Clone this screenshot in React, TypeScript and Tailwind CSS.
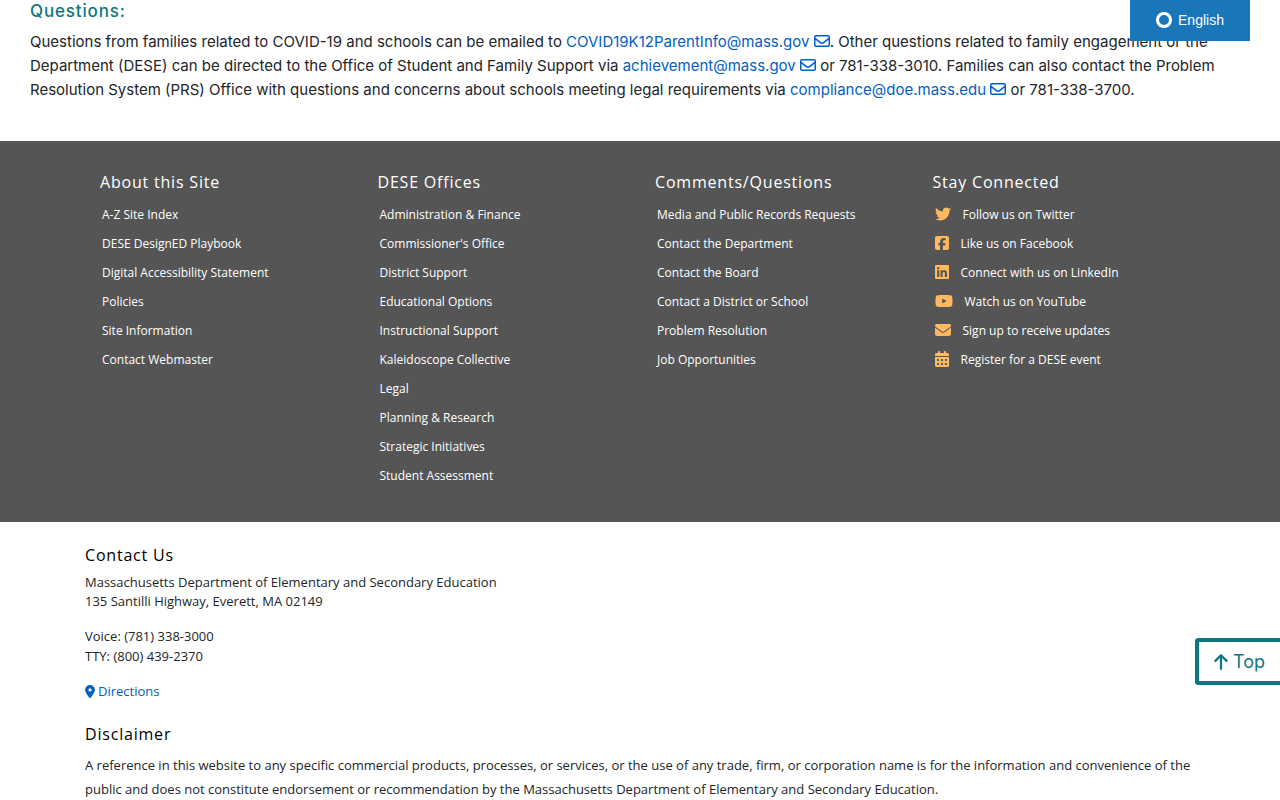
import type { ReactNode } from 'react';
import {
  FaArrowUp,
  FaCalendarDays,
  FaEnvelope,
  FaLinkedin,
  FaLocationDot,
  FaRegEnvelope,
  FaSquareFacebook,
  FaTwitter,
  FaYoutube,
} from 'react-icons/fa6';

const aboutLinks = [
  'A-Z Site Index',
  'DESE DesignED Playbook',
  'Digital Accessibility Statement',
  'Policies',
  'Site Information',
  'Contact Webmaster',
];

const officeLinks = [
  'Administration & Finance',
  "Commissioner's Office",
  'District Support',
  'Educational Options',
  'Instructional Support',
  'Kaleidoscope Collective',
  'Legal',
  'Planning & Research',
  'Strategic Initiatives',
  'Student Assessment',
];

const commentLinks = [
  'Media and Public Records Requests',
  'Contact the Department',
  'Contact the Board',
  'Contact a District or School',
  'Problem Resolution',
  'Job Opportunities',
];

const socialLinks = [
  { label: 'Follow us on Twitter', icon: <FaTwitter className="h-4 w-4" /> },
  { label: 'Like us on Facebook', icon: <FaSquareFacebook className="h-4 w-3.5" /> },
  { label: 'Connect with us on LinkedIn', icon: <FaLinkedin className="h-4 w-3.5" /> },
  { label: 'Watch us on YouTube', icon: <FaYoutube className="h-4 w-[18px]" /> },
  { label: 'Sign up to receive updates', icon: <FaEnvelope className="h-4 w-4" /> },
  { label: 'Register for a DESE event', icon: <FaCalendarDays className="h-4 w-3.5" /> },
];

function MailLink({ address }: { address: string }) {
  return (
    <a href={`mailto:${address}`} className="text-[#0060c7] hover:underline">
      {address} <FaRegEnvelope className="inline h-4 w-4 align-[-2px]" />
    </a>
  );
}

interface FooterColumnProps {
  title: string;
  children: ReactNode;
}

function FooterColumn({ title, children }: FooterColumnProps) {
  return (
    <div className="px-[15px]">
      <h2 className="text-base leading-6 font-medium tracking-wider">{title}</h2>
      <ul className="mt-1.5 px-0.5 text-xs font-medium">{children}</ul>
    </div>
  );
}

function FooterLink({ label, icon }: { label: string; icon?: ReactNode }) {
  return (
    <li className="h-[29px]">
      <a href="#" className="inline-flex h-[29px] items-center gap-3 hover:underline">
        {icon && <span className="pb-px text-[#ffb961]">{icon}</span>}
        {label}
      </a>
    </li>
  );
}

export default function App() {
  return (
    <div className="bg-white font-['Open_Sans','Noto_Sans',sans-serif] text-[#212529]">
      <button
        type="button"
        className="fixed top-0 right-[30px] z-10 flex h-[41px] w-[120px] items-center justify-center gap-1.5 bg-[#1976b9] pb-px font-['Liberation_Sans',Arial,sans-serif] text-sm text-white"
      >
        <span className="h-4 w-4 rounded-full border-3 border-white" />
        English
      </button>

      <main className="px-[30px] pb-[39px] font-['Inter',sans-serif]">
        <h2 className="text-[17px] leading-[22px] font-medium tracking-wider text-[#0e7680]">Questions:</h2>
        <p className="mt-2 text-[15px] leading-6">
          Questions from families related to COVID-19 and schools can be emailed to{' '}
          <MailLink address="COVID19K12ParentInfo@mass.gov" />. Other questions related to family engagement or the
          Department (DESE) can be directed to the Office of Student and Family Support via{' '}
          <MailLink address="achievement@mass.gov" /> or 781-338-3010. Families can also contact the Problem
          Resolution System (PRS) Office with questions and concerns about schools meeting legal requirements via{' '}
          <MailLink address="compliance@doe.mass.edu" /> or 781-338-3700.
        </p>
      </main>

      <footer>
        <div className="bg-[#555] pt-[29px] pb-8 text-white">
          <div className="mx-auto grid max-w-[1110px] grid-cols-4">
            <FooterColumn title="About this Site">
              {aboutLinks.map((label) => (
                <FooterLink key={label} label={label} />
              ))}
            </FooterColumn>
            <FooterColumn title="DESE Offices">
              {officeLinks.map((label) => (
                <FooterLink key={label} label={label} />
              ))}
            </FooterColumn>
            <FooterColumn title="Comments/Questions">
              {commentLinks.map((label) => (
                <FooterLink key={label} label={label} />
              ))}
            </FooterColumn>
            <FooterColumn title="Stay Connected">
              {socialLinks.map((link) => (
                <FooterLink key={link.label} label={link.label} icon={link.icon} />
              ))}
            </FooterColumn>
          </div>
        </div>

        <div className="mx-auto max-w-[1110px] pt-[21px] text-[13px] leading-[19px]">
          <h2 className="text-base leading-6 tracking-wider text-black">Contact Us</h2>
          <address className="mt-1.5 not-italic">
            Massachusetts Department of Elementary and Secondary Education
            <br />
            135 Santilli Highway, Everett, MA 02149
          </address>
          <p className="mt-[15px] leading-5">
            Voice: (781) 338-3000
            <br />
            TTY: (800) 439-2370
          </p>
          <p className="mt-4">
            <a href="#" className="flex w-fit items-center gap-[3px] text-[#0060c7] hover:underline">
              <FaLocationDot className="h-[13px] w-2.5" />
              Directions
            </a>
          </p>
          <h2 className="mt-[21px] text-base leading-6 tracking-wider text-black">Disclaimer</h2>
          <p className="mt-[7px] leading-6">
            A reference in this website to any specific commercial products, processes, or services, or the use of any
            trade, firm, or corporation name is for the information and convenience of the public and does not
            constitute endorsement or recommendation by the Massachusetts Department of Elementary and Secondary
            Education.
          </p>
        </div>
      </footer>

      <a
        href="#"
        className="fixed right-0 bottom-[115px] z-10 flex h-[47px] w-[85px] items-center gap-1 rounded-l border-4 border-r-0 border-[#0e7680] bg-white pl-3.5 font-['Inter',sans-serif] text-lg text-[#0e7680]"
      >
        <FaArrowUp className="h-[18px] w-4" />
        Top
      </a>
    </div>
  );
}
